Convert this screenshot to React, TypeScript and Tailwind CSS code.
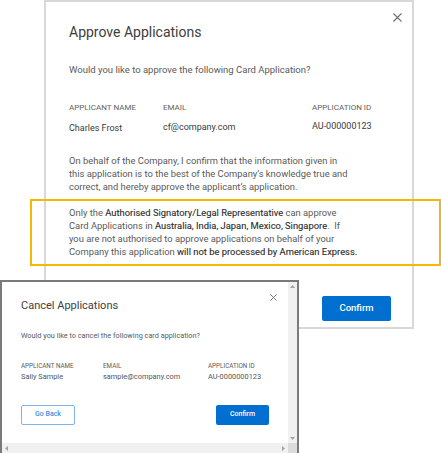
import React from "react";

function CloseIcon({ size, color }: { size: number; color: string }) {
  return (
    <svg width={size} height={size} viewBox="0 0 10 10" fill="none">
      <path d="M1 1L9 9M9 1L1 9" stroke={color} strokeWidth="1.3" strokeLinecap="square" />
    </svg>
  );
}

function ApproveDialog() {
  return (
    <div className="absolute left-[44px] top-0 w-[370px] h-[329px] border-2 border-[#d8d8d8] bg-white">
      <div className="absolute top-[11px] right-[10px]">
        <CloseIcon size={9} color="#6b6b6b" />
      </div>
      <div className="flex flex-col pl-[23px] pt-[20px]">
        <div className="text-[14px] leading-[20px] text-[#3d3d3d]">Approve Applications</div>
        <div className="mt-[21px] text-[9.5px] leading-[14px] text-[#5a5a5a]">
          Would you like to approve the following Card Application?
        </div>
        <div className="mt-[25px] grid grid-cols-[94px_149px_auto]">
          <div className="text-[8px] leading-[12px] text-[#5f5f5f]">APPLICANT NAME</div>
          <div className="text-[8px] leading-[12px] text-[#5f5f5f]">EMAIL</div>
          <div className="text-[8px] leading-[12px] text-[#5f5f5f]">APPLICATION ID</div>
          <div className="mt-[8px] text-[9px] leading-[12px] text-[#3a3a3a]">Charles Frost</div>
          <div className="mt-[7px] text-[9px] leading-[12px] text-[#3a3a3a]">cf@company.com</div>
          <div className="mt-[6px] text-[9px] leading-[12px] text-[#3a3a3a]">AU-000000123</div>
        </div>
        <div className="mt-[20px] text-[9.4px] leading-[13px] text-[#5a5a5a]">
          On behalf of the Company, I confirm that the information given in
          <br />
          this application is to the best of the Company’s knowledge true and
          <br />
          correct, and hereby approve the applicant’s application.
        </div>
        <div className="mt-[13px] text-[9.4px] leading-[13px] text-[#5a5a5a]">
          Only the <span className="text-[#2a2a2a] [-webkit-text-stroke:0.1px_#2a2a2a]">Authorised Signatory/Legal Representative</span> can approve
          <br />
          Card Applications in <span className="text-[#2a2a2a] [-webkit-text-stroke:0.1px_#2a2a2a]">Australia, India, Japan, Mexico, Singapore</span>.&nbsp; If
          <br />
          you are not authorised to approve applications on behalf of your
          <br />
          Company this application <span className="text-[#2a2a2a] [-webkit-text-stroke:0.1px_#2a2a2a]">will not be processed by American Express.</span>
        </div>
        <div className="mt-[38px] flex justify-end pr-[21px]">
          <div className="w-[69px] h-[25px] rounded-[2px] bg-[#006fcf] flex items-center justify-center text-white text-[9.5px] font-medium">
            Confirm
          </div>
        </div>
      </div>
    </div>
  );
}

function CancelDialog() {
  return (
    <div className="absolute left-0 top-[280px] w-[299px] h-[173px] border-2 border-b-0 border-[#7a7a7a] bg-white flex flex-col">
      <div className="flex flex-1 min-h-0">
        <div className="relative flex-1 flex flex-col pl-[19px] pr-[19px] pt-[16px]">
          <div className="absolute top-[12px] right-[11px]">
            <CloseIcon size={7} color="#707070" />
          </div>
          <div className="text-[11px] leading-[16px] text-[#3d3d3d]">Cancel Applications</div>
          <div className="mt-[16px] text-[7.3px] leading-[11px] text-[#5a5a5a]">
            Would you like to cancel the following card application?
          </div>
          <div className="mt-[21px] grid grid-cols-[82px_105px_auto]">
            <div className="text-[6.3px] leading-[9px] text-[#5a5a5a]">APPLICANT NAME</div>
            <div className="text-[6.3px] leading-[9px] text-[#5a5a5a]">EMAIL</div>
            <div className="text-[6.3px] leading-[9px] text-[#5a5a5a]">APPLICATION ID</div>
            <div className="mt-[0.5px] text-[7.4px] leading-[10px] text-[#555]">Sally Sample</div>
            <div className="mt-[0.5px] text-[7.4px] leading-[10px] text-[#555]">sample@company.com</div>
            <div className="mt-[0.5px] text-[7.4px] leading-[10px] text-[#555]">AU-0000000123</div>
          </div>
          <div className="mt-[23px] flex justify-between">
            <div className="w-[54px] h-[20px] rounded-[2px] border border-[#7db4ec] flex items-center justify-center text-[7px] font-medium text-[#3d8fe0]">
              Go Back
            </div>
            <div className="w-[53px] h-[20px] rounded-[2px] bg-[#006fcf] flex items-center justify-center text-[7px] font-medium text-white">
              Confirm
            </div>
          </div>
        </div>
        <div className="w-[9px] bg-[#f1f1f1] flex flex-col items-center justify-between py-[3px]">
          <svg width="5" height="3" viewBox="0 0 5 3"><path d="M0 3L2.5 0L5 3Z" fill="#a3a3a3" /></svg>
          <svg width="5" height="3" viewBox="0 0 5 3"><path d="M0 0L2.5 3L5 0Z" fill="#a3a3a3" /></svg>
        </div>
      </div>
      <div className="h-[10px] flex">
        <div className="flex-1 bg-[#f1f1f1] flex items-center justify-between px-[3px]">
          <svg width="3" height="5" viewBox="0 0 3 5"><path d="M3 0L0 2.5L3 5Z" fill="#a3a3a3" /></svg>
          <svg width="3" height="5" viewBox="0 0 3 5"><path d="M0 0L3 2.5L0 5Z" fill="#a3a3a3" /></svg>
        </div>
        <div className="w-[9px] bg-[#dcdcdc]" />
      </div>
    </div>
  );
}

export default function App() {
  return (
    <div className="relative w-[441px] h-[453px] bg-white overflow-hidden font-[family-name:Roboto,sans-serif]">
      <ApproveDialog />
      <div className="absolute left-[30px] top-[199px] w-[411px] h-[67px] border-2 border-[#f5b800] pointer-events-none" />
      <CancelDialog />
    </div>
  );
}
